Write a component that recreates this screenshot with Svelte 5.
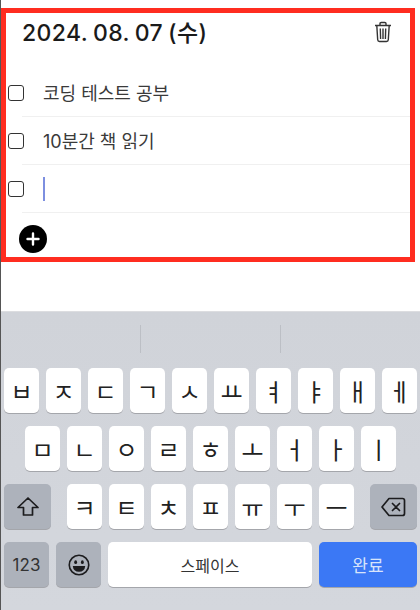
<script>
  const rows = [
    ['ㅂ','ㅈ','ㄷ','ㄱ','ㅅ','ㅛ','ㅕ','ㅑ','ㅐ','ㅔ'],
    ['ㅁ','ㄴ','ㅇ','ㄹ','ㅎ','ㅗ','ㅓ','ㅏ','ㅣ']
  ];
  const row3 = ['ㅋ','ㅌ','ㅊ','ㅍ','ㅠ','ㅜ','ㅡ'];
</script>

<div class="page">
  <section class="frame">
    <header class="head">
      <h1>2024. 08. 07 (수)</h1>
      <svg class="trash" width="18" height="22" viewBox="0 0 18 22" fill="none" stroke="#333" stroke-width="1.4">
        <path d="M1 4.500h16M6 4.500V2.600Q6 1.500 7.200 1.500h3.600Q12 1.500 12 2.600v1.900M2.800 4.500l.9 14.200q.1 1.800 1.800 1.800h7q1.700 0 1.800-1.800l.9-14.200M6.300 7.500l.3 10.500M9 7.500V18M11.700 7.500 11.400 18"/>
      </svg>
    </header>
    <div class="todo first"><span class="box"></span><span class="text">코딩 테스트 공부</span></div>
    <div class="todo"><span class="box"></span><span class="text">10분간 책 읽기</span></div>
    <div class="todo"><span class="box"></span><span class="caret"></span></div>
    <div class="add">
      <svg width="28" height="28" viewBox="0 0 28 28"><circle cx="14" cy="14" r="14" fill="#000"/><path d="M14 8.500v11M8.500 14h11" stroke="#fff" stroke-width="2.400" stroke-linecap="round"/></svg>
    </div>
  </section>

  <section class="keyboard">
    <div class="suggest"><i></i><i></i></div>
    <div class="rows">
      <div class="row">
        {#each rows[0] as k}<span class="key">{k}</span>{/each}
      </div>
      <div class="row">
        {#each rows[1] as k}<span class="key">{k}</span>{/each}
      </div>
      <div class="row wide">
        <span class="key fn side">
          <svg width="24" height="21" viewBox="0 0 24 21" fill="none" stroke="#1c1c1e" stroke-width="1.700" stroke-linejoin="round"><path d="M12 2 2 11.500h5.500V19h9v-7.500H22Z"/></svg>
        </span>
        <div class="mid">
          {#each row3 as k}<span class="key">{k}</span>{/each}
        </div>
        <span class="key fn side">
          <svg width="25" height="20" viewBox="0 0 25 20" fill="none" stroke="#1c1c1e" stroke-width="1.700" stroke-linejoin="round" stroke-linecap="round"><path d="M8 1.500h13.500q2 0 2 2v13q0 2-2 2H8L1 10ZM11.500 6.500l7 7M18.500 6.500l-7 7"/></svg>
        </span>
      </div>
      <div class="row bottom">
        <span class="key fn num">123</span>
        <span class="key fn emoji">
          <svg width="22" height="22" viewBox="0 0 23 23"><circle cx="11.500" cy="11.500" r="10.200" fill="none" stroke="#1c1c1e" stroke-width="1.700"/><ellipse cx="8" cy="8.500" rx="1.500" ry="2" fill="#1c1c1e"/><ellipse cx="15" cy="8.500" rx="1.500" ry="2" fill="#1c1c1e"/><path d="M5 12.500h13q-.6 6-6.500 6T5 12.500Z" fill="#1c1c1e"/></svg>
        </span>
        <span class="key space">스페이스</span>
        <span class="key done">완료</span>
      </div>
    </div>
  </section>
</div>

<style>
  :global(body) {
    margin: 0;
    background: #fff;
  }
  .page {
    width: 420px;
    height: 610px;
    box-sizing: border-box;
    padding-top: 8px;
    border-left: 1px solid #555;
    display: flex;
    flex-direction: column;
    font-family: Inter, "Noto Sans CJK KR", sans-serif;
    overflow: hidden;
  }
  .frame {
    width: 414px;
    height: 254px;
    box-sizing: border-box;
    border: 5px solid #ff2d20;
  }
  .head {
    height: 35px;
    display: flex;
    align-items: center;
    justify-content: space-between;
    padding: 0 18px 0 16px;
  }
  h1 {
    margin: 0;
    font-size: 23px;
    font-weight: 500;
    color: #1a1a1a;
    letter-spacing: 0.4px;
    word-spacing: -1.500px;
  }
  .trash {
    margin-top: 3px;
  }
  .todo {
    height: 48px;
    display: flex;
    align-items: center;
    gap: 19px;
    box-shadow: inset 0 -1px 0 #f0f0f0;
    margin-left: 16px;
  }
  .todo.first {
    margin-top: 20px;
    height: 49px;
  }
  .box {
    width: 14px;
    height: 14px;
    margin-left: -14px;
    border: 1.500px solid #333;
    border-radius: 3px;
    flex: none;
  }
  .text {
    font-size: 18px;
    font-weight: 400;
    color: #3a3a3a;
    margin-top: -2px;
  }
  .caret {
    width: 2px;
    height: 24px;
    background: #7d8fe0;
  }
  .add {
    padding: 12px 0 0 13px;
    line-height: 0;
  }
  .keyboard {
    margin-top: 49px;
    margin-left: -1px;
    width: 420px;
    flex: 1;
    background: linear-gradient(#d0d3d9, #d4d7dd);
    border-top: 1px solid #dcdde0;
    border-left: 1px solid #555;
    box-sizing: border-box;
  }
  .suggest {
    height: 56px;
    display: flex;
    justify-content: center;
    gap: 139px;
    padding-top: 13px;
    box-sizing: border-box;
  }
  .suggest i {
    width: 1px;
    height: 28px;
    background: #bcbfc5;
  }
  .rows {
    display: flex;
    flex-direction: column;
    gap: 13px;
    padding: 0 3px;
  }
  .row {
    display: flex;
    justify-content: center;
    gap: 7px;
  }
  .key {
    width: 35px;
    height: 45px;
    background: #fff;
    border-radius: 5px;
    box-shadow: 0 1px 0 #a4a6ab;
    display: flex;
    align-items: center;
    justify-content: center;
    font-size: 24px;
    font-weight: 400;
    color: #222;
    flex: none;
  }
  .mid {
    display: flex;
    gap: 7px;
  }
  .row.wide {
    justify-content: space-between;
  }
  .fn {
    background: #adb2bb;
  }
  .side {
    width: 47px;
  }
  .row.bottom {
    justify-content: flex-start;
    gap: 7px;
  }
  .num {
    width: 45px;
    font-size: 17px;
    color: #333;
  }
  .emoji {
    width: 45px;
  }
  .space {
    width: 204px;
    font-size: 16px;
    color: #333;
  }
  .done {
    width: 98px;
    background: #3b78f5;
    color: #d8e4fb;
    font-size: 17px;
  }
</style>
